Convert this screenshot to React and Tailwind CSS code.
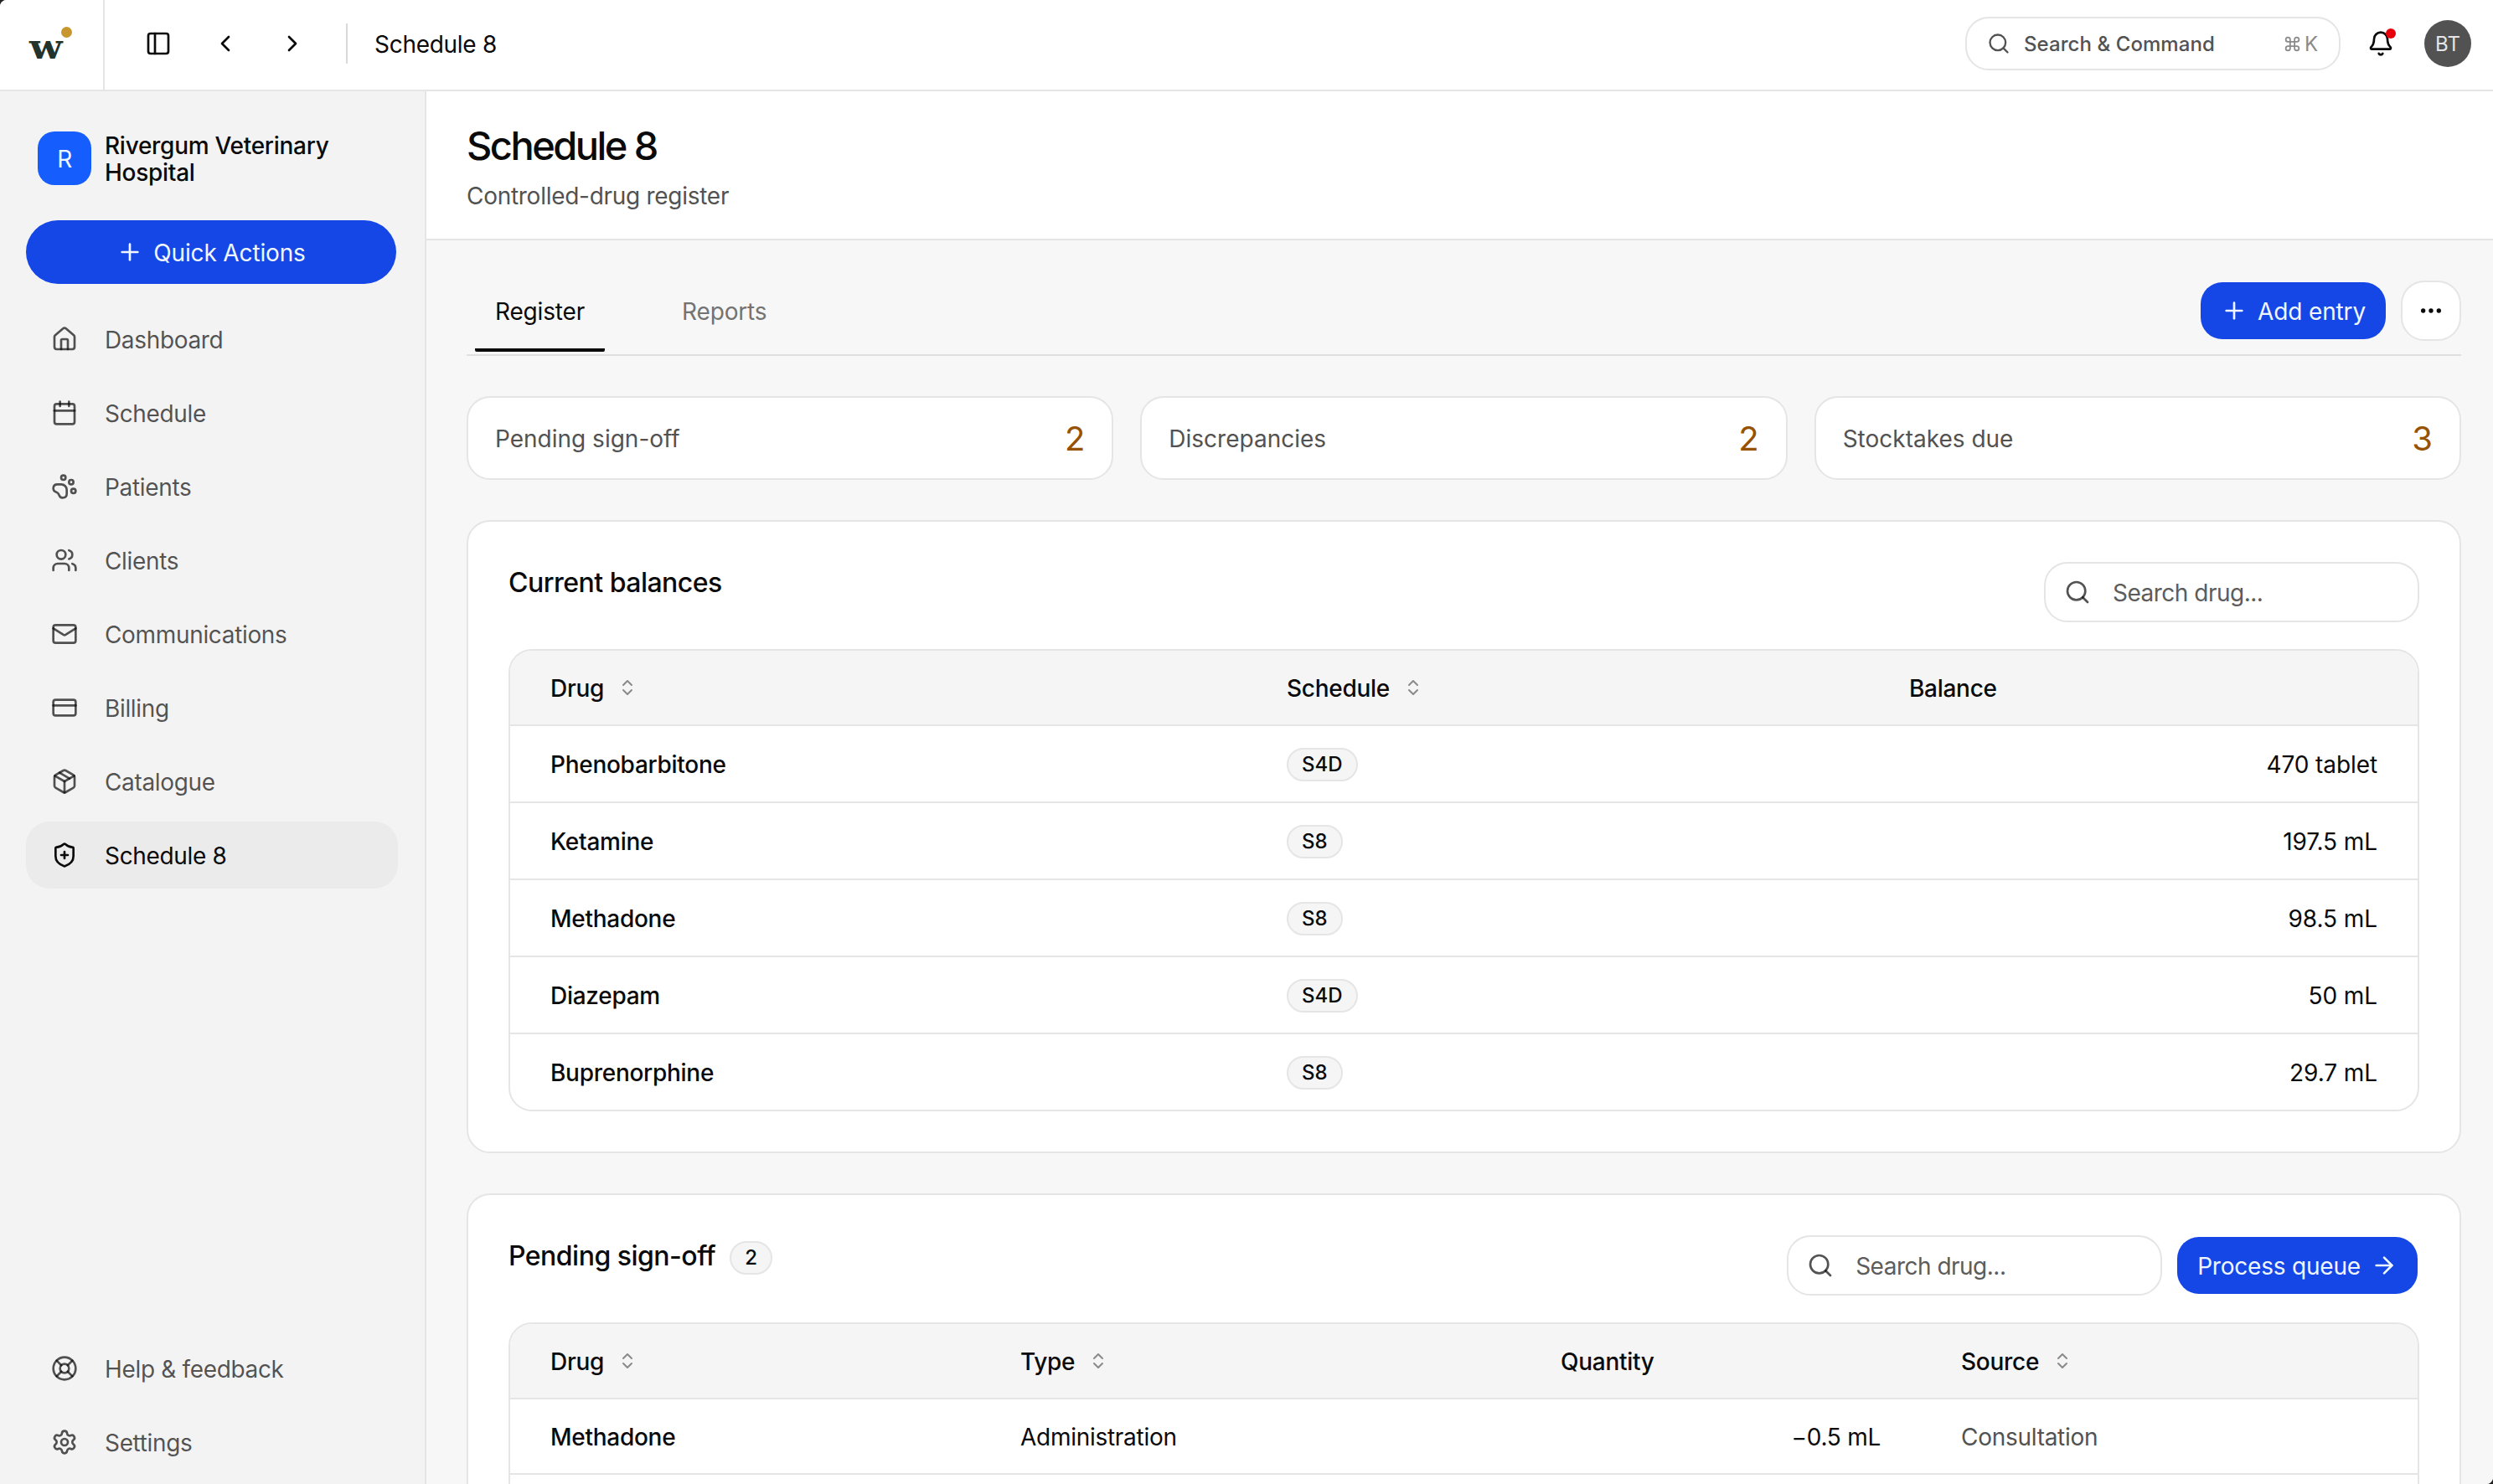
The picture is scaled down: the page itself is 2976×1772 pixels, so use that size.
import {
  ArrowRight,
  Bell,
  Calendar,
  ChevronLeft,
  ChevronRight,
  ChevronsUpDown,
  Command,
  CreditCard,
  Ellipsis,
  House,
  LifeBuoy,
  Mail,
  Package,
  PanelLeft,
  PawPrint,
  Plus,
  Search,
  Settings,
  ShieldPlus,
  Users,
} from "lucide-react";
import { useState } from "react";

const navItems = [
  { label: "Dashboard", icon: House },
  { label: "Schedule", icon: Calendar },
  { label: "Patients", icon: PawPrint },
  { label: "Clients", icon: Users },
  { label: "Communications", icon: Mail },
  { label: "Billing", icon: CreditCard },
  { label: "Catalogue", icon: Package },
  { label: "Schedule 8", icon: ShieldPlus },
];

const footerItems = [
  { label: "Help & feedback", icon: LifeBuoy },
  { label: "Settings", icon: Settings },
];

const stats = [
  { label: "Pending sign-off", value: 2 },
  { label: "Discrepancies", value: 2 },
  { label: "Stocktakes due", value: 3 },
];

const balances = [
  { drug: "Phenobarbitone", schedule: "S4D", balance: "470 tablet" },
  { drug: "Ketamine", schedule: "S8", balance: "197.5 mL" },
  { drug: "Methadone", schedule: "S8", balance: "98.5 mL" },
  { drug: "Diazepam", schedule: "S4D", balance: "50 mL" },
  { drug: "Buprenorphine", schedule: "S8", balance: "29.7 mL" },
];

const pending = [
  { drug: "Methadone", type: "Administration", quantity: "−0.5 mL", source: "Consultation" },
];

function NavItem({ label, icon: Icon, active, onClick }) {
  return (
    <button
      onClick={onClick}
      className={`flex h-20 w-full items-center gap-8 rounded-[28px] pl-[30px] text-left ${
        active ? "bg-[#ebebeb] text-[#0a0a0a]" : "text-[#0a0a0a]/70"
      }`}
    >
      <Icon size={32} />
      <span className="pt-[2px] tracking-[-0.012em]">{label}</span>
    </button>
  );
}

function TopBar() {
  return (
    <header className="flex h-[109px] shrink-0 border-b-2 border-[#e5e5e5] bg-white">
      <div className="flex w-[125px] shrink-0 items-center justify-center border-r-2 border-[#e5e5e5] pr-[14px]">
        <div className="relative h-[56px] w-[40px]">
          <span className="block origin-left scale-x-[1.12] font-['DejaVu_Serif',serif] text-[41px] leading-[61px] font-bold tracking-normal text-[#22332b]">
            w
          </span>
          <span className="absolute top-[6px] left-[38px] size-[13px] rounded-full bg-[#c7962f]" />
        </div>
      </div>

      <div className="flex flex-1 items-center pr-[26px] pb-[3px] pl-12">
        <PanelLeft size={32} />
        <ChevronLeft size={32} className="ml-12" />
        <ChevronRight size={32} className="ml-12" />
        <span className="ml-12 h-12 w-[2px] bg-[#d9d9d9]" />
        <span className="ml-8 pt-[2px]">Schedule 8</span>

        <button className="ml-auto flex h-16 w-[448px] items-center rounded-[28px] border-2 border-[#e5e5e5] pr-[25px] pl-[24px] text-[24px] font-medium tracking-normal text-[#525252]">
          <Search size={28} />
          <span className="ml-4 pt-[1px] tracking-[0.003em]">Search &amp; Command</span>
          <span className="ml-auto flex items-center gap-1 font-normal text-[#8a8a8a]">
            <Command size={21} />
            <span className="pt-[1px]">K</span>
          </span>
        </button>
        <span className="relative ml-8">
          <Bell size={32} />
          <span className="absolute -top-[2px] left-[22px] size-3 rounded-full bg-[#e7000b]" />
        </span>
        <span className="ml-9 flex size-14 items-center justify-center rounded-full bg-[#525252] pt-[1px] text-[24px] tracking-normal text-[#e5e5e5]">
          BT
        </span>
      </div>
    </header>
  );
}

function Sidebar() {
  const [active, setActive] = useState("Schedule 8");

  return (
    <aside className="flex w-[509px] shrink-0 flex-col border-r-2 border-[#e5e5e5] bg-[#f3f3f3] pt-12 pr-8 pb-[10px] pl-[31px]">
      <div className="flex h-16 items-start gap-4 pl-[14px]">
        <span className="flex size-16 items-center justify-center rounded-[20px] bg-[#155dfc] pt-[2px] text-[#eff6ff]">
          R
        </span>
        <span className="w-[320px] pt-[1px] leading-8 font-medium">
          Rivergum Veterinary Hospital
        </span>
      </div>

      <button className="mt-[42px] mr-[2px] flex h-[76px] shrink-0 items-center justify-center gap-3 rounded-[38px] bg-[#1447e6] tracking-[-0.005em] text-[#eff6ff]">
        <Plus size={32} />
        <span className="pt-[2px]">Quick Actions</span>
      </button>

      <nav className="mt-[26px] flex flex-col gap-2">
        {navItems.map((item) => (
          <NavItem
            key={item.label}
            {...item}
            active={item.label === active}
            onClick={() => setActive(item.label)}
          />
        ))}
      </nav>

      <div className="mt-auto flex flex-col gap-2">
        {footerItems.map((item) => (
          <NavItem key={item.label} {...item} />
        ))}
      </div>
    </aside>
  );
}

function SearchField() {
  const [value, setValue] = useState("");

  return (
    <label className="flex h-[72px] w-[448px] items-center gap-[26px] rounded-[28px] border-2 border-[#e5e5e5] bg-white px-[22px] text-[#0a0a0a]/70">
      <Search size={32} className="shrink-0" />
      <input
        value={value}
        onChange={(e) => setValue(e.target.value)}
        placeholder="Search drug..."
        className="w-full min-w-0 pt-[2px] tracking-[-0.018em] outline-none placeholder:text-[#5c5c5c]"
      />
    </label>
  );
}

function Chip({ children }) {
  return (
    <span className="inline-flex h-10 items-center rounded-full border-2 border-[#e5e5e5] bg-[#f5f5f5] px-4 text-[24px] font-medium tracking-normal">
      {children}
    </span>
  );
}

function HeadCell({ children, sortable }) {
  return (
    <div className="flex items-center gap-4 px-12 font-medium">
      <span className="pt-[2px]">{children}</span>
      {sortable && <ChevronsUpDown size={24} className="text-[#8a8a8a]" />}
    </div>
  );
}

function PrimaryButton({ children }) {
  return (
    <button className="flex h-[72px] items-center gap-3 rounded-[28px] border-2 border-transparent bg-[#1447e6] bg-clip-padding px-6 tracking-[-0.005em] text-[#eff6ff]">
      {children}
    </button>
  );
}

function Card({ children }) {
  return (
    <section className="mt-12 rounded-[28px] border-2 border-[#e5e5e5] bg-white p-12">
      {children}
    </section>
  );
}

function BalancesCard() {
  const cols = "grid grid-cols-[879px_743px_1fr] items-center";

  return (
    <Card>
      <div className="flex items-start justify-between">
        <h2 className="pt-[3px] text-[32px] leading-[44px] font-medium tracking-[-0.016em]">
          Current balances
        </h2>
        <SearchField />
      </div>

      <div className="mt-8 overflow-hidden rounded-[28px] border-2 border-[#e5e5e5]">
        <div className={`${cols} h-[90px] border-b-2 border-[#e5e5e5] bg-[#f5f5f5]`}>
          <HeadCell sortable>Drug</HeadCell>
          <HeadCell sortable>Schedule</HeadCell>
          <HeadCell>Balance</HeadCell>
        </div>
        {balances.map((row) => (
          <div
            key={row.drug}
            className={`${cols} h-[92px] border-b-2 border-[#e5e5e5] pt-[2px] last:h-[90px] last:border-b-0`}
          >
            <div className="px-12 font-medium">{row.drug}</div>
            <div className="flex px-12">
              <Chip>{row.schedule}</Chip>
            </div>
            <div className="px-12 text-right tracking-[-0.003em]">{row.balance}</div>
          </div>
        ))}
      </div>
    </Card>
  );
}

function PendingCard() {
  const cols = "grid grid-cols-[561px_645px_478px_1fr] items-center";

  return (
    <Card>
      <div className="flex items-start justify-between">
        <div className="flex gap-[17px]">
          <h2 className="pt-[3px] text-[32px] leading-[44px] font-medium tracking-[-0.016em]">
            Pending sign-off
          </h2>
          <span className="flex items-start pt-[7px]">
            <Chip>2</Chip>
          </span>
        </div>
        <div className="flex gap-4">
          <SearchField />
          <PrimaryButton>
            <span className="pt-[2px] tracking-[-0.007em]">Process queue</span>
            <ArrowRight size={32} />
          </PrimaryButton>
        </div>
      </div>

      <div className="mt-8 overflow-hidden rounded-[28px] border-2 border-[#e5e5e5]">
        <div className={`${cols} h-[90px] border-b-2 border-[#e5e5e5] bg-[#f5f5f5]`}>
          <HeadCell sortable>Drug</HeadCell>
          <HeadCell sortable>Type</HeadCell>
          <HeadCell>Quantity</HeadCell>
          <HeadCell sortable>Source</HeadCell>
        </div>
        {pending.map((row) => (
          <div
            key={row.drug}
            className={`${cols} h-[90px] border-b-2 border-[#e5e5e5] pt-[2px]`}
          >
            <div className="px-12 font-medium">{row.drug}</div>
            <div className="px-12">{row.type}</div>
            <div className="px-12 text-right">{row.quantity}</div>
            <div className="px-12 text-[#525252]">{row.source}</div>
          </div>
        ))}
        <div className="h-[90px]" />
      </div>
    </Card>
  );
}

export default function App() {
  const [tab, setTab] = useState("Register");

  return (
    <div className="h-screen overflow-hidden bg-[#222222]">
      <div className="flex h-full flex-col overflow-hidden rounded-tl-[8px] rounded-br-[8px] bg-white font-[Inter,sans-serif] text-[28px] leading-[40px] tracking-[-0.01em] text-[#0a0a0a]">
        <TopBar />

        <div className="flex min-h-0 flex-1">
          <Sidebar />

          <main className="flex min-w-0 flex-1 flex-col overflow-hidden bg-[#f7f7f7]">
            <div className="h-[178px] shrink-0 border-b-2 border-[#e5e5e5] bg-white pt-[37px] pl-12">
              <h1 className="text-[47px] leading-[56px] font-medium tracking-[-0.054em]">
                Schedule 8
              </h1>
              <p className="mt-[12px] text-[#525252]">Controlled-drug register</p>
            </div>

            <div className="pt-12 pr-[38px] pl-12">
              <div className="flex h-[90px] justify-between border-b-2 border-[#e0e0e0]">
                <div className="flex gap-[68px] pl-[10px]">
                  {["Register", "Reports"].map((name) => (
                    <button
                      key={name}
                      onClick={() => setTab(name)}
                      className={`h-[85px] rounded-b-[2px] border-b-4 px-6 pb-[7px] tracking-[-0.006em] ${
                        tab === name ? "border-[#0a0a0a]" : "border-transparent text-[#737373]"
                      }`}
                    >
                      {name}
                    </button>
                  ))}
                </div>
                <div className="flex gap-4">
                  <PrimaryButton>
                    <Plus size={32} />
                    <span className="pt-[2px]">Add entry</span>
                  </PrimaryButton>
                  <button className="flex size-[72px] items-center justify-center rounded-[28px] border-2 border-[#e5e5e5] bg-white">
                    <Ellipsis size={32} />
                  </button>
                </div>
              </div>

              <div className="mt-12 grid grid-cols-3 gap-8">
                {stats.map((stat) => (
                  <div
                    key={stat.label}
                    className="flex h-[100px] items-center justify-between rounded-[28px] border-2 border-[#e5e5e5] bg-white px-8 pt-[2px] tracking-normal"
                  >
                    <span className="text-[#525252]">{stat.label}</span>
                    <span className="text-[40px] text-[#965200]">{stat.value}</span>
                  </div>
                ))}
              </div>

              <BalancesCard />
              <PendingCard />
            </div>
          </main>
        </div>
      </div>
    </div>
  );
}
